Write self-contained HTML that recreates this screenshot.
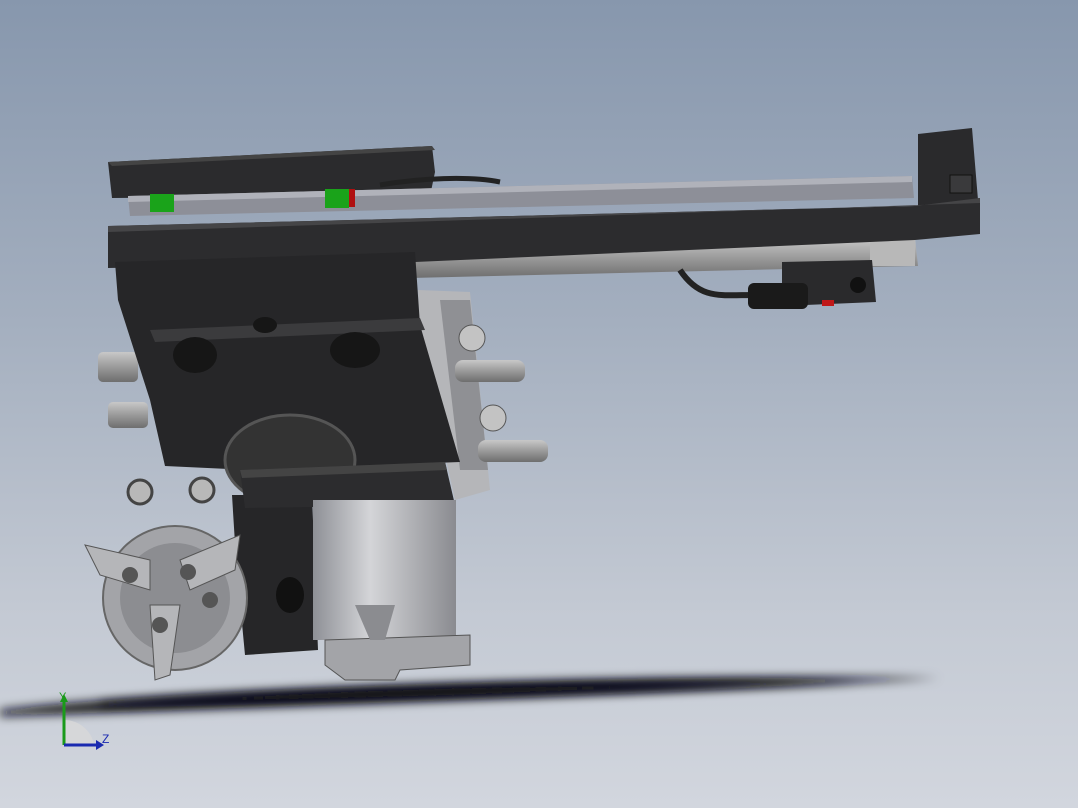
<!DOCTYPE html>
<html><head><meta charset="utf-8"><style>
html,body{margin:0;padding:0;}
body{width:1078px;height:808px;overflow:hidden;background:linear-gradient(180deg,#8797ad 0%,#a4afbf 40%,#c3c9d3 75%,#d2d6de 100%);font-family:"Liberation Sans",sans-serif;}
svg{position:absolute;left:0;top:0;}
</style></head><body>
<svg width="1078" height="808" viewBox="0 0 1078 808">
<defs>
<filter id="b" x="-20%" y="-200%" width="140%" height="500%"><feGaussianBlur stdDeviation="5"/></filter>
<linearGradient id="cyl" x1="0" x2="1"><stop offset="0" stop-color="#8e9096"/><stop offset=".4" stop-color="#d4d5d8"/><stop offset="1" stop-color="#8a8b90"/></linearGradient>
<linearGradient id="rod" x1="0" y1="0" x2="0" y2="1"><stop offset="0" stop-color="#c8c8c8"/><stop offset=".5" stop-color="#9a9a9a"/><stop offset="1" stop-color="#6e6e6e"/></linearGradient>
</defs>
<!-- shadow -->
<path d="M0,710 C200,688 600,674 940,678 C700,692 300,706 0,716Z" fill="#111114" filter="url(#b)"/>
<path d="M100,703 C300,690 600,682 860,682 C600,692 300,700 100,706Z" fill="#111114" filter="url(#b)"/>
<!-- rail cylinder under beam -->
<polygon points="410,252 915,238 918,266 410,278" fill="url(#rod)"/>
<rect x="870" y="236" width="45" height="30" fill="#b8b8b8"/>
<!-- top plate -->
<polygon points="108,162 432,146 435,172 430,196 112,198" fill="#2b2b2d"/>
<polygon points="108,162 432,146 435,150 112,166" fill="#444"/>
<path d="M380,185 C420,178 470,176 500,182" stroke="#222" stroke-width="5" fill="none"/>
<!-- rail -->
<polygon points="128,196 912,176 914,198 130,216" fill="#8d8f98"/>
<polygon points="128,196 912,176 912,182 128,202" fill="#b0b2ba"/>
<rect x="150" y="194" width="24" height="18" fill="#1aa31a"/>
<rect x="325" y="189" width="24" height="19" fill="#1aa31a"/>
<rect x="349" y="189" width="6" height="18" fill="#b01010"/>
<!-- end block -->
<polygon points="918,134 972,128 978,200 918,206" fill="#2a2a2c"/>
<rect x="950" y="175" width="22" height="18" fill="#3a3a3c" stroke="#111"/>
<!-- beam -->
<polygon points="108,226 915,206 980,198 980,234 915,240 415,262 108,268" fill="#2c2c2e"/>
<polygon points="108,226 915,206 980,198 980,203 108,232" fill="#454547"/>
<!-- sensor -->
<polygon points="782,262 872,260 876,302 782,306" fill="#2a2a2c"/>
<circle cx="858" cy="285" r="8" fill="#111"/>
<rect x="822" y="300" width="12" height="6" fill="#c01818"/>
<path d="M680,270 C700,300 720,295 755,295" stroke="#222" stroke-width="6" fill="none"/>
<rect x="748" y="283" width="60" height="26" rx="6" fill="#1a1a1a"/>
<!-- right manifold -->
<polygon points="418,290 470,292 490,490 455,500 420,340" fill="#b5b6b9"/>
<polygon points="440,300 470,300 488,470 460,470" fill="#8f9094"/>
<rect x="455" y="360" width="70" height="22" rx="8" fill="url(#rod)"/>
<rect x="478" y="440" width="70" height="22" rx="8" fill="url(#rod)"/>
<circle cx="472" cy="338" r="13" fill="#c3c3c3" stroke="#555"/>
<circle cx="493" cy="418" r="13" fill="#c3c3c3" stroke="#555"/>
<rect x="98" y="352" width="40" height="30" rx="5" fill="url(#rod)"/>
<rect x="108" y="402" width="40" height="26" rx="5" fill="url(#rod)"/>
<!-- vertical block -->
<polygon points="115,262 415,252 420,325 460,462 250,470 165,466 150,400 118,300" fill="#262628"/>
<polygon points="150,330 420,318 425,330 155,342" fill="#3b3b3d"/>
<ellipse cx="195" cy="355" rx="22" ry="18" fill="#161616"/>
<ellipse cx="355" cy="350" rx="25" ry="18" fill="#161616"/>
<ellipse cx="265" cy="325" rx="12" ry="8" fill="#161616"/>
<!-- wheel -->
<ellipse cx="290" cy="460" rx="65" ry="45" fill="#333" stroke="#555" stroke-width="3"/>
<!-- dark block behind chuck -->
<polygon points="232,495 312,495 318,650 245,655 236,560" fill="#262628"/>
<ellipse cx="290" cy="595" rx="14" ry="18" fill="#111"/>
<!-- lower bracket -->
<polygon points="240,470 445,462 455,505 245,508" fill="#2c2c2e"/>
<polygon points="240,470 445,462 447,470 242,478" fill="#444"/>
<!-- motor cylinder -->
<rect x="313" y="500" width="143" height="140" fill="url(#cyl)"/>
<polygon points="325,640 470,635 470,665 400,670 395,680 345,680 325,665" fill="#a3a4a8" stroke="#555"/>
<polygon points="355,605 395,605 385,640 370,640" fill="#8b8c90"/>
<!-- chuck -->
<circle cx="175" cy="598" r="72" fill="#a3a4a8" stroke="#666" stroke-width="2"/>
<circle cx="175" cy="598" r="55" fill="#8c8d91"/>
<polygon points="85,545 150,560 150,590 100,575" fill="#b5b6b9" stroke="#555"/>
<polygon points="180,560 240,535 235,570 190,590" fill="#b5b6b9" stroke="#555"/>
<polygon points="150,605 180,605 170,675 155,680" fill="#b5b6b9" stroke="#555"/>
<circle cx="130" cy="575" r="8" fill="#555"/><circle cx="188" cy="572" r="8" fill="#555"/>
<circle cx="160" cy="625" r="8" fill="#555"/><circle cx="210" cy="600" r="8" fill="#555"/>
<circle cx="140" cy="492" r="12" fill="#b8b8b8" stroke="#444" stroke-width="3"/>
<circle cx="202" cy="490" r="12" fill="#b8b8b8" stroke="#444" stroke-width="3"/>
<!-- triad -->
<path d="M64,745 L64,720 A30,30 0 0 1 94,745Z" fill="#d8d8d8" opacity=".8"/>
<line x1="64" y1="745" x2="64" y2="700" stroke="#1a9a1a" stroke-width="3"/>
<line x1="64" y1="745" x2="96" y2="745" stroke="#1a2ab0" stroke-width="3"/>
<polygon points="96,740 104,745 96,750" fill="#1a2ab0"/>
<polygon points="60,702 64,694 68,702" fill="#1a9a1a"/>
<text x="59" y="700" font-size="11" fill="#1a9a1a" font-family="Liberation Sans">Y</text>
<text x="102" y="743" font-size="12" fill="#1a2ab0" font-family="Liberation Sans">Z</text>
</svg>
</body></html>
